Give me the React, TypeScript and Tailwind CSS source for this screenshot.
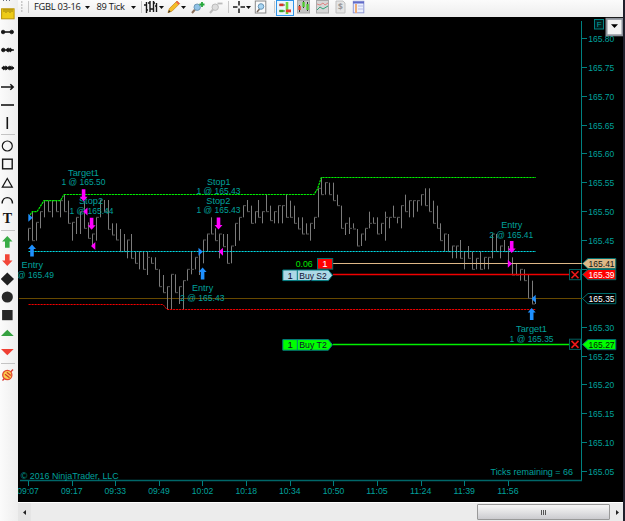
import React from "react";

type Bar = [number, number, number];

// x, high, low in thirds of a pixel below y=160
const BARS: Bar[] = [
  [28.3,205,242],[32.3,155,242],[36.3,187,242],[40.3,155,205],[44.3,122,172],[48.3,122,155],[52.3,122,172],[56.3,122,155],[60.3,122,172],[64.3,104,155],[67.7,122,190],[71.7,187,242],[75.7,172,222],[79.7,155,222],[83.7,122,205],[87.7,187,235],[91.7,222,260],[95.7,172,242],[99.7,120,172],[103.7,120,155],[107.7,120,208],[111.7,190,225],[115.7,190,240],[119.7,207,275],[123.7,222,275],[127.3,240,295],[131.3,222,295],[135.3,275,310],[139.3,275,328],[143.3,275,328],[147.3,275,345],[151.3,292,310],[155.3,292,328],[159.3,328,380],[163,345,398],[167,380,448],[171,343,448],[175,343,398],[179,380,432],[183,362,448],[187,328,362],[191,275,343],[195,292,328],[199,275,345],[202.7,240,310],[206.7,222,275],[210.7,172,222],[214.7,205,242],[218.7,222,295],[222.7,222,260],[226.7,222,310],[230.7,258,310],[234.7,190,258],[238.7,172,242],[242.7,137,172],[246.7,120,155],[250.7,137,190],[254.7,155,190],[258.3,120,172],[262.3,155,190],[266.3,105,155],[270.3,137,182],[274.3,155,190],[278.3,137,190],[282.3,137,190],[286.3,105,172],[290.3,122,172],[294.3,137,190],[298.3,172,207],[302.3,172,222],[306.3,190,222],[310.3,190,242],[314.3,172,207],[317.7,85,172],[321.3,52,104],[325.3,68,104],[329.3,68,104],[333.3,68,122],[337.3,104,137],[341.3,137,205],[345.3,190,225],[349.3,172,222],[353.3,190,205],[357.3,207,258],[361.3,222,258],[365.3,205,242],[369.3,155,205],[373.3,172,190],[377.3,172,222],[381.3,190,222],[385.3,155,242],[389.3,172,205],[393.3,137,172],[397.3,172,190],[401,137,205],[405,104,155],[409,122,172],[413,122,172],[417,122,155],[421,104,137],[425,85,137],[428.7,85,155],[432.7,122,190],[436.7,137,205],[440.3,190,242],[444.3,222,275],[448.3,222,275],[452.3,258,295],[456.3,258,295],[460.3,240,295],[464.3,275,328],[468.3,258,295],[472.3,275,328],[476.3,295,328],[480.3,275,328],[484.3,292,328],[488.3,292,328],[492.3,222,295],[496,222,275],[500,258,295],[504,240,275],[508,258,310],[512,292,345],[516,310,345],[520,328,362],[524,328,362],[527.7,345,415],[531.7,362,432],[535.3,415,432],
];
const TIMES = ["09:07","09:17","09:33","09:49","10:02","10:18","10:34","10:50","11:05","11:24","11:39","11:56"];
const HIDDEN_PRICES = [8];
const TEAL = "#00a09c";

type LabelProps = { x: number; y: number; w: number; children: React.ReactNode; fill?: string; size?: number; anchor?: "start" | "middle" };
function Label({ x, y, w, children, fill = TEAL, size = 9.6, anchor = "start" }: LabelProps) {
  return (
    <text x={x} y={y} textLength={w} lengthAdjust="spacingAndGlyphs" fill={fill} fontSize={size} textAnchor={anchor}>
      {children}
    </text>
  );
}

function Bars() {
  return (
    <g stroke="#7c7c7c" strokeWidth="1">
      {BARS.map(([x, h, l], i) => {
        const px = Math.round(x - 0.15) + 0.5;
        const next = BARS[i + 1];
        let tick: React.ReactNode = null;
        if (next) {
          const raw = next[1] + next[2] > h + l ? l : h;
          const c = Math.min(Math.max(raw, next[1]), next[2]);
          const cy = 160 + c / 3;
          tick = <path d={`M${px - 0.5} ${cy}h3`} stroke="#565656" />;
        }
        return (
          <g key={i}>
            <path d={`M${px} ${160 + h / 3}V${160 + l / 3}`} />
            {tick}
          </g>
        );
      })}
    </g>
  );
}

function Arrow({ x, y, up, color }: { x: number; y: number; up?: boolean; color: string }) {
  return <path transform={`translate(${x} ${y}) scale(1 ${up ? -1 : 1})`} d="M-1.8-6H1.8V1.5H4L0 6L-4 1.5H-1.8Z" fill={color} />;
}
function Pointer({ x, y, left, color }: { x: number; y: number; left?: boolean; color: string }) {
  return <path transform={`translate(${x} ${y}) scale(${left ? -1 : 1} 1)`} d="M-2-4L2.3 0L-2 4Z" fill={color} />;
}
function PriceTag({ y, bg, fg, text }: { y: number; bg: string; fg: string; text: string }) {
  return (
    <g>
      <path d={`M582.5 ${y}L588 ${y - 5}H615.8V${y + 5.2}H588Z`} fill={bg} stroke="#006d6d" />
      <Label x={588.6} y={y + 3.6} w={26} fill={fg}>{text}</Label>
    </g>
  );
}
function OrderTag({ y, bg, text }: { y: number; bg: string; text: string }) {
  return (
    <g>
      <path d={`M282.8 ${y - 5.2}H328.3L332.5 ${y}L328.3 ${y + 5.4}H282.8Z`} fill={bg} stroke="#007c80" />
      <path d={`M297.3 ${y - 5}v10`} stroke="#007c80" />
      <text x="290.2" y={y + 3.5} fontSize="9.6" textAnchor="middle" fill="#101030">1</text>
      <Label x={299.3} y={y + 3.5} w={27.5} fill="#101030">{text}</Label>
    </g>
  );
}
function CloseBox({ y }: { y: number }) {
  return (
    <g>
      <rect x="569.5" y={y - 5} width="11" height="10.2" fill="#080000" stroke="#006060" />
      <path d={`M571.5 ${y - 3.3}l7 7M578.5 ${y - 3.3}l-7 7`} stroke="#f01818" strokeWidth="1.6" />
    </g>
  );
}

function Chart() {
  return (
    <svg className="block h-[485px] w-[605px] shrink-0 bg-black" viewBox="18 17 605 485" fontFamily="'Liberation Sans', Arial, sans-serif" fill="none">
      <g stroke="#008080">
        <path d="M581.5 21V481" />
        <path d="M20 480.5H582" stroke="#006668" strokeWidth="1.4" />
        {Array.from({ length: 16 }, (_, i) => <path key={i} d={`M582 ${Math.round(38 + i * 28.87) + 0.5}h5`} />)}
        {TIMES.map((t, i) => <path key={t} d={`M${Math.round(28 + i * 43.62) + 0.5} 481v5`} />)}
      </g>
      {Array.from({ length: 16 }, (_, i) =>
        HIDDEN_PRICES.includes(i) || i === 9 ? null : (
          <Label key={i} x={588.3} y={42 + i * 28.87} w={26}>{(165.8 - i * 0.05).toFixed(2)}</Label>
        ),
      )}
      {TIMES.map((t, i) => <Label key={t} x={28.1 + i * 43.62} y={494.3} w={21.5} anchor="middle">{t}</Label>)}

      <path d="M19 298.5H582" stroke="#674900" />
      <Bars />
      <path d="M30 215L32.3 211.7H37L44 200.6H60.5L64 194.5H314L317.5 189L321.3 177.5H536" stroke="#00f000" strokeWidth="1.2" strokeDasharray="2.3 .7" />
      <path d="M28.5 251.5H536" stroke="#00d8e0" strokeDasharray="2.2 .8" />
      <path d="M28.5 304.5H163L167 309.5H536" stroke="#f00000" strokeDasharray="2.2 .8" />
      <path d="M333 263.5H582" stroke="#deb887" strokeWidth="1.2" />
      <path d="M333 274.5H570" stroke="#f00000" strokeWidth="1.3" />
      <path d="M333 344.5H570" stroke="#00f000" strokeWidth="1.3" />

      <Label x={68} y={175.8} w={31}>Target1</Label>
      <Label x={61.5} y={185.1} w={44}>1 @ 165.50</Label>
      <Label x={79} y={204.1} w={24}>Stop2</Label>
      <Label x={69.5} y={213.6} w={44}>1 @ 165.44</Label>
      <Label x={21.5} y={268.2} w={21.5}>Entry</Label>
      <Label x={10} y={277.9} w={44}>1 @ 165.49</Label>
      <Label x={207} y={184.6} w={23.5}>Stop1</Label>
      <Label x={196.5} y={193.8} w={44}>1 @ 165.43</Label>
      <Label x={206.3} y={203.5} w={24}>Stop2</Label>
      <Label x={196.5} y={213} w={44}>1 @ 165.43</Label>
      <Label x={192} y={291.3} w={21.2}>Entry</Label>
      <Label x={180} y={300.9} w={44.5}>2 @ 165.43</Label>
      <Label x={501.2} y={227.8} w={21.2}>Entry</Label>
      <Label x={489.3} y={237.5} w={44}>2 @ 165.41</Label>
      <Label x={516} y={332} w={31}>Target1</Label>
      <Label x={509.6} y={341.5} w={44}>1 @ 165.35</Label>

      <Arrow x={83.6} y={195.2} color="#ff00ff" />
      <Arrow x={91.6} y={223.7} color="#ff00ff" />
      <Arrow x={218.5} y={223.5} color="#ff00ff" />
      <Arrow x={511.7} y={247} color="#ff00ff" />
      <Arrow x={32} y={250.5} up color="#1e90ff" />
      <Arrow x={202.6} y={273.5} up color="#1e90ff" />
      <Arrow x={531.7} y={314} up color="#1e90ff" />
      <Pointer x={30.3} y={217.7} color="#1e90ff" />
      <Pointer x={200.5} y={251.8} color="#1e90ff" />
      <Pointer x={533.7} y={298.7} left color="#1e90ff" />
      <Pointer x={85.5} y={211.5} left color="#ff00ff" />
      <Pointer x={93.3} y={246} left color="#ff00ff" />
      <Pointer x={221} y={251.8} left color="#ff00ff" />
      <Pointer x={509.8} y={263.7} color="#ff00ff" />

      <Label x={295.7} y={267.4} w={17} fill="#00e600">0.06</Label>
      <OrderTag y={275.2} bg="#add8e6" text="Buy S2" />
      <OrderTag y={344.8} bg="#00ff00" text="Buy T2" />
      <rect x="317.5" y="258.5" width="15.2" height="10.6" fill="#f00" stroke="#007070" />
      <text x="325" y="267.3" fontSize="9.6" textAnchor="middle" fill="#fff">1</text>
      <CloseBox y={274.5} />
      <CloseBox y={344.2} />
      <PriceTag y={263.5} bg="#deb887" fg="#141414" text="165.41" />
      <PriceTag y={274.5} bg="#ff0000" fg="#fff" text="165.39" />
      <PriceTag y={298.5} bg="#000" fg="#fff" text="165.35" />
      <PriceTag y={344.5} bg="#00ff00" fg="#052005" text="165.27" />

      <Label x={20.7} y={478.7} w={98}>© 2016 NinjaTrader, LLC</Label>
      <Label x={490.5} y={475} w={82.5}>Ticks remaining = 66</Label>
      <rect x="594.5" y="19.5" width="9" height="9.5" fill="#001c1c" stroke="#008080" />
      <text x="599.1" y="27.2" fontSize="8" textAnchor="middle" fill={TEAL}>F</text>
      <rect x="606.5" y="18.8" width="16" height="16.5" fill="#f3f3f3" stroke="#8d929a" strokeWidth="2" />
      <path d="M611 24.2H618L614.5 28Z" fill="#000" />
    </svg>
  );
}

function Tool({ children }: { children: React.ReactNode }) {
  return (
    <div className="flex h-[18.25px] w-[14px] shrink-0 items-center justify-center">
      <svg className="h-[14px] w-[14px]" viewBox="0 0 14 14" fill="none" stroke="#161616" strokeWidth="1.4">{children}</svg>
    </div>
  );
}
function Rule() {
  return <div className="flex h-[4.75px] w-[14px] shrink-0 items-center"><div className="h-px w-full bg-[#c4c4c4]" /></div>;
}

function Sidebar() {
  return (
    <div className="flex w-[18px] shrink-0 flex-col overflow-hidden bg-gradient-to-r from-[#fbfbfb] to-[#eeeeee] pl-px">
      <div className="flex h-[4.4px] shrink-0 gap-[2px] pl-[2px]">
        <div className="h-px w-px bg-gray-500" /><div className="h-px w-px bg-gray-500" /><div className="h-px w-px bg-gray-500" />
      </div>
      <Tool><rect x=".6" y="1.8" width="12.5" height="10" fill="#edcb17" stroke="#ba9308" strokeWidth="1" /><path d="M3 2v3M5 2v4M7 2v3M9 2v4M11 2v3" stroke="#7d6108" strokeWidth=".7" /></Tool>
      <Tool><path d="M2 7h10" strokeWidth="1.6" /><circle cx="2.1" cy="7" r="1.8" fill="#161616" strokeWidth=".8" /><circle cx="10.7" cy="7" r="1.8" fill="#161616" strokeWidth=".8" /></Tool>
      <Tool><path d="M1 7h12" /><circle cx="2.3" cy="7" r="1.8" fill="#161616" strokeWidth=".8" /><circle cx="7.3" cy="7" r="1.8" fill="#161616" strokeWidth=".8" /><path d="M9 4.5l3 2.5L9 9.5z" fill="#161616" stroke="none" /></Tool>
      <Tool><path d="M1 7h12" /><circle cx="4.7" cy="7" r="1.8" fill="#161616" strokeWidth=".8" /><circle cx="8.8" cy="7" r="1.8" fill="#161616" strokeWidth=".8" /><path d="M3 4.5L.2 7 3 9.5zM10.5 4.5L13.3 7l-2.8 2.5z" fill="#161616" stroke="none" /></Tool>
      <Tool><path d="M0 7h12M9.3 4.2L12.2 7 9.3 9.8" strokeWidth="1.5" /></Tool>
      <Tool><path d="M0 7h13" strokeWidth="1.6" /></Tool>
      <Tool><path d="M6.3 1v12" strokeWidth="1.6" /></Tool>
      <Rule />
      <Tool><circle cx="6.3" cy="7" r="5" strokeWidth="1.2" /></Tool>
      <Tool><rect x="1.6" y="2.2" width="9.6" height="9.6" /></Tool>
      <Tool><path d="M6.3 2.5L11.3 11.2H1.3Z" strokeWidth="1.2" /></Tool>
      <Tool><path d="M1.1 9.5C1.5 1.7 11 1.7 11.5 9.5" /></Tool>
      <div className="flex h-[18.25px] w-[13px] shrink-0 items-center justify-center font-['Liberation_Serif',serif] text-[14px] font-bold leading-none text-[#161616]">T</div>
      <Rule />
      <Tool><path d="M6.3 1L11.5 6.5H8.6V12.8H4V6.5H1.1Z" fill="#38ac46" stroke="none" /></Tool>
      <Tool><path d="M6.3 13L11.5 7.5H8.6V1.2H4V7.5H1.1Z" fill="#f24638" stroke="none" /></Tool>
      <Tool><path d="M6.3.5L13 7 6.3 13.5-.3 7Z" fill="#202020" stroke="none" /></Tool>
      <Tool><circle cx="6.3" cy="7" r="5.6" fill="#282828" stroke="none" /></Tool>
      <Tool><rect x="1.1" y="2" width="10.5" height="10.2" fill="#272727" stroke="none" /></Tool>
      <Tool><path d="M6.3 3.7L12.7 10H-.1Z" fill="#35a140" stroke="none" /></Tool>
      <Tool><path d="M6.3 10.2L12.7 4H-.1Z" fill="#ef4034" stroke="none" /></Tool>
      <Rule />
      <Tool><path d="M1.5 12.5L12 1.5" stroke="#d6372b" strokeWidth="1.3" /><circle cx="6.3" cy="7" r="4.6" fill="#f9cf4e" stroke="#e2492f" strokeWidth="1.3" /><path d="M4 6.2l4.5 3.6M5.8 4.3l4 3.2" stroke="#d6372b" strokeWidth="1.2" /></Tool>
    </div>
  );
}

function Caret() {
  return <svg className="h-[3px] w-[5px] shrink-0" viewBox="0 0 5 3"><path d="M0 0h5L2.5 3Z" fill="#111" /></svg>;
}
function Icon({ children }: { children: React.ReactNode }) {
  return <svg className="h-[14px] w-[14px] shrink-0" viewBox="0 0 14 14" fill="none" stroke="#181818">{children}</svg>;
}
function Divider() {
  return <div className="h-[12px] w-px shrink-0 bg-[#c8c8c8]" />;
}
function Slot({ w, children }: { w: string; children: React.ReactNode }) {
  return <div className={`flex h-full shrink-0 items-center ${w}`}>{children}</div>;
}

function Toolbar() {
  return (
    <div className="flex h-[17px] w-[605px] shrink-0 items-center bg-gradient-to-b from-[#fbfbfb] to-[#ededed] pb-[3px] font-['Open_Sans','Noto_Sans',sans-serif] text-[9.3px] leading-none text-[#151515]">
      <Slot w="w-[10px] pl-[3px]"><svg className="h-[12px] w-[2px]" viewBox="0 0 2 12"><path d="M0 1h1.5M0 4h1.5M0 7h1.5M0 10h1.5" stroke="#999" /></svg></Slot>
      <Slot w="w-[6px]"><Divider /></Slot>
      <Slot w="w-[51px]"><span className="whitespace-nowrap tracking-[-0.25px]">FGBL 03-16</span></Slot>
      <Slot w="w-[11.5px]"><Caret /></Slot>
      <Slot w="w-[34px]"><span className="whitespace-nowrap tracking-[-0.25px]">89 Tick</span></Slot>
      <Slot w="w-[10px]"><Caret /></Slot>
      <Slot w="w-[3.5px]"><Divider /></Slot>
      <Slot w="w-[14.5px]"><Icon><path d="M2.5 2v11M0 5h2M2 10h2M6 1v11M4 3h2M6 9h2M9.5 1v11M8 9h2M9 3h2M12.5 3v9M11 6h2" strokeWidth="1.4" /></Icon></Slot>
      <Slot w="w-[8px]"><Caret /></Slot>
      <Slot w="w-[14.5px]"><Icon><path d="M1 12.7l1.4-4.2L10 1l2.7 2.5-7.6 7.6Z" fill="#f4bc27" stroke="#c98c24" strokeWidth=".8" /><path d="M10 1l2.7 2.5-1.2 1.2-2.6-2.6Z" fill="#ed5d52" stroke="none" /><path d="M1 12.7L2 10l1.7 1.8Z" fill="#333" stroke="none" /></Icon></Slot>
      <Slot w="w-[9.5px]"><Caret /></Slot>
      <Slot w="w-[18.5px]"><Icon><path d="M1 13L4 9.5" stroke="#8a6e59" strokeWidth="2" /><circle cx="6.2" cy="7.2" r="3.2" fill="#8fc2e6" stroke="#6e98b6" /><path d="M11 2v5M8.5 4.5h5" stroke="#26a83b" strokeWidth="1.8" /></Icon></Slot>
      <Slot w="w-[18.5px]"><Icon><path d="M1 13L4 9.5" stroke="#bbb" strokeWidth="2" /><circle cx="6.2" cy="7.2" r="3.2" fill="#ddd" stroke="#bbb" /><path d="M8.5 3.5h5" stroke="#bbb" strokeWidth="1.8" /></Icon></Slot>
      <Slot w="w-[4px]"><Divider /></Slot>
      <Slot w="w-[14px]"><Icon><path d="M7 1v4.5M7 8.5V13M1 7h4.5M8.5 7H13" strokeWidth="1.5" /></Icon></Slot>
      <Slot w="w-[8.5px]"><Caret /></Slot>
      <Slot w="w-[20px]"><Icon><rect x="1.3" y="1" width="10.5" height="12" fill="#fafafa" stroke="#888" /><path d="M3 12l2.5-3" stroke="#75665b" strokeWidth="1.5" /><circle cx="7" cy="6.5" r="2.8" fill="#a8d5f2" stroke="#6694b6" /></Icon></Slot>
      <Slot w="w-[2px]"><Divider /></Slot>
      <Slot w="w-[21px]"><div className="mt-px flex h-[16px] w-[18px] items-center justify-center border border-[#3096ea] bg-[#eaf5fd]"><Icon><path d="M1 4h6" stroke="#555" /><rect x="1.5" y="2.6" width="4" height="2.6" fill="#d53525" stroke="none" /><path d="M9 1v12" stroke="#6fd83a" strokeWidth="2.6" /><path d="M1 10h6" stroke="#444" /><rect x="1.5" y="8.8" width="4" height="2.4" fill="#38a622" stroke="none" /><rect x="8" y="8.5" width="5" height="2.8" fill="#e63928" stroke="none" /></Icon></div></Slot>
      <Slot w="w-[18.5px]"><Icon><rect x=".5" y=".5" width="12" height="12.5" fill="#c4c4c4" stroke="#aaa" /><path d="M2.5 5v7M6.5 1v7M10.5 2v9" stroke="#333" /><rect x="1.4" y="6" width="2.3" height="4" fill="#e4462e" stroke="none" /><rect x="5.4" y="2" width="2.3" height="5" fill="#52c82e" stroke="none" /><rect x="9.4" y="4" width="2.3" height="6" fill="#52c82e" stroke="none" /></Icon></Slot>
      <Slot w="w-[18.5px]"><Icon><rect x=".5" y=".5" width="12" height="12.5" fill="#d6d6d6" stroke="#aaa" /><path d="M1 4l3 1 3-2 2 2 3-2" stroke="#e18783" /><path d="M1 10l3-3 3 2 5-3" stroke="#33a579" /></Icon></Slot>
      <Slot w="w-[17.5px]"><Icon><path d="M2 1h7l2 2v10H2Z" fill="#e4e4e4" stroke="#c0c0c0" /><text x="6.5" y="10.3" fontSize="8.5" fontWeight="700" textAnchor="middle" fill="#999" stroke="none">$</text></Icon></Slot>
      <Slot w="w-[14px]"><Icon><rect x="1.3" y="1.3" width="10.5" height="11.5" fill="#eaf0ff" stroke="#929bd6" /><path d="M1 2.5h11" stroke="#626bc8" strokeWidth="2" /><path d="M4 4v9" stroke="#efad76" strokeWidth="2" /><path d="M6 6h5M6 9h5" stroke="#b8bae2" /></Icon></Slot>
    </div>
  );
}

function Scrollbar() {
  return (
    <div className="flex h-[19px] w-[605px] shrink-0 items-start border-t border-white bg-[#ebebeb]">
      <div className="flex h-full w-[13px] items-center justify-center bg-[#e5e5e5]"><svg className="h-[5px] w-[3px]" viewBox="0 0 3 5"><path d="M3 0v5L0 2.5Z" fill="#222" /></svg></div>
      <div className="h-full flex-1 bg-[#ececec]" />
      <div className="mt-px flex h-[16px] w-[133px] items-center justify-center gap-px rounded-[1px] border border-[#999] bg-gradient-to-b from-[#f6f6f6] via-[#e2e2e4] to-[#cbcbcf]">
        <div className="h-[5px] w-px bg-[#555]" /><div className="h-[5px] w-px bg-[#555]" /><div className="h-[5px] w-px bg-[#555]" />
      </div>
      <div className="flex h-full w-[13px] items-center justify-center pl-[2px]"><svg className="h-[5px] w-[3px]" viewBox="0 0 3 5"><path d="M0 0v5L3 2.5Z" fill="#222" /></svg></div>
    </div>
  );
}

export default function App() {
  return (
    <div className="flex h-[521px] w-[625px] overflow-hidden bg-[#ededed]">
      <Sidebar />
      <div className="flex w-[605px] shrink-0 flex-col">
        <Toolbar />
        <Chart />
        <Scrollbar />
      </div>
      <div className="w-[2px] shrink-0 bg-[#20202c]" />
    </div>
  );
}
